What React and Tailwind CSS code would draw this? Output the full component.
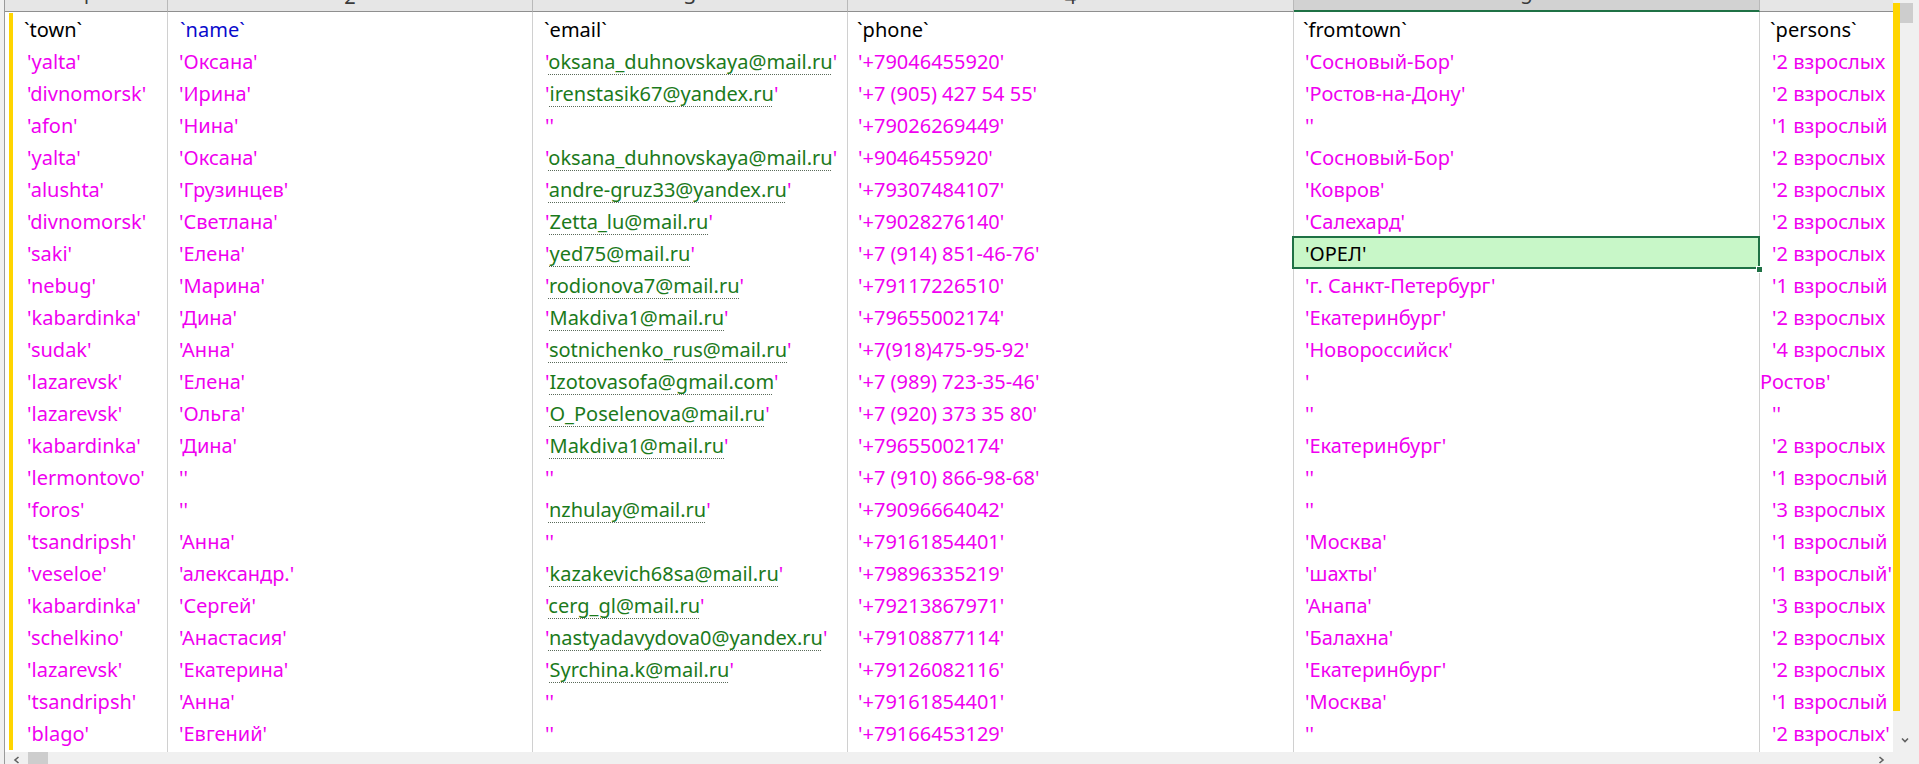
import React from "react";

const MAG = "text-[#f000f0]";

const rows = [
  ["'yalta'", "'Оксана'", "oksana_duhnovskaya@mail.ru", "'+79046455920'", "'Сосновый-Бор'", "'2 взрослых"],
  ["'divnomorsk'", "'Ирина'", "irenstasik67@yandex.ru", "'+7 (905) 427 54 55'", "'Ростов-на-Дону'", "'2 взрослых"],
  ["'afon'", "'Нина'", "", "'+79026269449'", "''", "'1 взрослый"],
  ["'yalta'", "'Оксана'", "oksana_duhnovskaya@mail.ru", "'+9046455920'", "'Сосновый-Бор'", "'2 взрослых"],
  ["'alushta'", "'Грузинцев'", "andre-gruz33@yandex.ru", "'+79307484107'", "'Ковров'", "'2 взрослых"],
  ["'divnomorsk'", "'Светлана'", "Zetta_lu@mail.ru", "'+79028276140'", "'Салехард'", "'2 взрослых"],
  ["'saki'", "'Елена'", "yed75@mail.ru", "'+7 (914) 851-46-76'", "'ОРЕЛ'", "'2 взрослых"],
  ["'nebug'", "'Марина'", "rodionova7@mail.ru", "'+79117226510'", "'г. Санкт-Петербург'", "'1 взрослый"],
  ["'kabardinka'", "'Дина'", "Makdiva1@mail.ru", "'+79655002174'", "'Екатеринбург'", "'2 взрослых"],
  ["'sudak'", "'Анна'", "sotnichenko_rus@mail.ru", "'+7(918)475-95-92'", "'Новороссийск'", "'4 взрослых"],
  ["'lazarevsk'", "'Елена'", "Izotovasofa@gmail.com", "'+7 (989) 723-35-46'", "'", "Ростов'"],
  ["'lazarevsk'", "'Ольга'", "O_Poselenova@mail.ru", "'+7 (920) 373 35 80'", "''", "''"],
  ["'kabardinka'", "'Дина'", "Makdiva1@mail.ru", "'+79655002174'", "'Екатеринбург'", "'2 взрослых"],
  ["'lermontovo'", "''", "", "'+7 (910) 866-98-68'", "''", "'1 взрослый"],
  ["'foros'", "''", "nzhulay@mail.ru", "'+79096664042'", "''", "'3 взрослых"],
  ["'tsandripsh'", "'Анна'", "", "'+79161854401'", "'Москва'", "'1 взрослый"],
  ["'veseloe'", "'александр.'", "kazakevich68sa@mail.ru", "'+79896335219'", "'шахты'", "'1 взрослый'"],
  ["'kabardinka'", "'Сергей'", "cerg_gl@mail.ru", "'+79213867971'", "'Анапа'", "'3 взрослых"],
  ["'schelkino'", "'Анастасия'", "nastyadavydova0@yandex.ru", "'+79108877114'", "'Балахна'", "'2 взрослых"],
  ["'lazarevsk'", "'Екатерина'", "Syrchina.k@mail.ru", "'+79126082116'", "'Екатеринбург'", "'2 взрослых"],
  ["'tsandripsh'", "'Анна'", "", "'+79161854401'", "'Москва'", "'1 взрослый"],
  ["'blago'", "'Евгений'", "", "'+79166453129'", "''", "'2 взрослых'"],
];

const cellBase = "h-[32px] shrink-0 overflow-hidden whitespace-pre leading-[28px] pt-[4px]";

function Email({ v }) {
  if (!v) return <span className={MAG}>''</span>;
  return (
    <span>
      <span className={MAG}>'</span>
      <span className="text-[#1b7a1b] underline decoration-dotted decoration-[#5a6a5a] underline-offset-[5px] decoration-1">{v}</span>
      <span className={MAG}>'</span>
    </span>
  );
}

function Row({ r, idx }) {
  const selected = idx === 6;
  return (
    <div className="flex h-[32px] shrink-0">
      <div className={`${cellBase} w-[155px] border-r border-[#d0d0d0] pl-[14px] ${MAG}`}>{r[0]}</div>
      <div className={`${cellBase} w-[365px] border-r border-[#d0d0d0] pl-[11px] ${MAG}`}>{r[1]}</div>
      <div className={`${cellBase} w-[315px] border-r border-[#d0d0d0] pl-[12px]`}>
        <Email v={r[2]} />
      </div>
      <div className={`${cellBase} w-[446px] border-r border-[#d0d0d0] pl-[10px] ${MAG}`}>{r[3]}</div>
      {selected ? (
        <div className={`${cellBase} relative w-[466px] border-r border-[#d0d0d0] pl-[11px] text-black bg-[#c8f7c8] overflow-visible`}>
          {r[4]}
          <div className="absolute top-[0px] bottom-[-1px] left-[-2px] right-[-1px] border-2 border-[#1f7145] z-10" />
          <div className="absolute right-[-4px] bottom-[-5px] w-[7px] h-[7px] bg-[#1f7145] border border-white z-20" />
        </div>
      ) : (
        <div className={`${cellBase} w-[466px] border-r border-[#d0d0d0] pl-[11px] ${MAG}`}>{r[4]}</div>
      )}
      <div className={`${cellBase} flex-1 ${idx === 10 ? "pl-[0px]" : "pl-[12px]"} ${MAG}`}>{r[5]}</div>
    </div>
  );
}

function HeadCell({ w, label, sel, last }) {
  return (
    <div
      className={`${w} h-[12px] shrink-0 overflow-hidden flex justify-center items-start ${
        sel ? "bg-[#d2d2d2] border-b-2 border-[#1f7145]" : "bg-[#e6e6e6] border-b border-[#8f8f8f]"
      } ${last ? "" : "border-r border-r-[#b9b9b9]"}`}
    >
      {label && <span className="leading-none text-[20px] text-[#3a3a3a] mt-[-13px]">{label}</span>}
    </div>
  );
}

function Chevron({ dir }) {
  const d =
    dir === "left" ? "M5.5 1 L2 4 L5.5 7" : dir === "right" ? "M2.5 1 L6 4 L2.5 7" : "M1 2.5 L4 5.5 L7 2.5";
  return (
    <svg width="8" height="8" viewBox="0 0 8 8" className="shrink-0">
      <path d={d} fill="none" stroke="#606060" strokeWidth="1.6" />
    </svg>
  );
}

export default function App() {
  return (
    <div className="w-[1919px] h-[764px] overflow-hidden bg-white flex font-['Noto_Sans',sans-serif] text-[20px]">
      <div className="w-[4px] h-full bg-[#f0f0f0] shrink-0" />
      <div className="w-[1px] h-full bg-[#9a9a9a] shrink-0" />
      <div className="flex-1 flex flex-col min-w-0">
        <div className="flex h-[12px] shrink-0">
          <HeadCell w="w-[163px]" label="1" />
          <HeadCell w="w-[365px]" label="2" />
          <HeadCell w="w-[315px]" label="3" />
          <HeadCell w="w-[446px]" label="4" />
          <HeadCell w="w-[466px]" label="5" sel />
          <HeadCell w="flex-1" label="" last />
        </div>
        <div className="flex h-[740px] shrink-0 overflow-hidden">
          <div className="w-[4px] shrink-0" />
          <div className="w-[4px] shrink-0 flex flex-col">
            <div className="h-[1px]" />
            <div className="h-[737px] bg-[#ffd500]" />
          </div>
          <div className="flex-1 flex flex-col min-w-0 overflow-hidden">
            <div className="flex h-[32px] shrink-0">
              <div className={`${cellBase} w-[155px] border-r border-[#d0d0d0] pl-[11px] text-black`}>`town`</div>
              <div className={`${cellBase} w-[365px] border-r border-[#d0d0d0] pl-[12px] text-[#0a0acc]`}>`name`</div>
              <div className={`${cellBase} w-[315px] border-r border-[#d0d0d0] pl-[11px] text-black`}>`email`</div>
              <div className={`${cellBase} w-[446px] border-r border-[#d0d0d0] pl-[9px] text-black`}>`phone`</div>
              <div className={`${cellBase} w-[466px] border-r border-[#d0d0d0] pl-[9px] text-black`}>`fromtown`</div>
              <div className={`${cellBase} flex-1 pl-[10px] text-black`}>`persons`</div>
            </div>
            {rows.map((r, i) => (
              <Row key={i} r={r} idx={i} />
            ))}
            <div className="flex h-[32px] shrink-0">
              <div className="w-[155px] border-r border-[#d0d0d0] shrink-0" />
              <div className="w-[365px] border-r border-[#d0d0d0] shrink-0" />
              <div className="w-[315px] border-r border-[#d0d0d0] shrink-0" />
              <div className="w-[446px] border-r border-[#d0d0d0] shrink-0" />
              <div className="w-[466px] border-r border-[#d0d0d0] shrink-0" />
            </div>
          </div>
        </div>
        <div className="flex h-[12px] shrink-0 bg-[#f0f0f0] items-end">
          <div className="w-[8px] shrink-0" />
          <div className="h-[8px] flex items-start"><Chevron dir="left" /></div>
          <div className="w-[7px] shrink-0" />
          <div className="w-[20px] h-full bg-[#cdcdcd] shrink-0" />
          <div className="flex-1" />
          <div className="h-[8px] flex items-start"><Chevron dir="right" /></div>
          <div className="w-[8px] shrink-0" />
        </div>
      </div>
      <div className="w-[7px] h-full shrink-0 flex flex-col bg-[#f0f0f0]">
        <div className="h-[3px]" />
        <div className="h-[708px] bg-[#ffd500]" />
      </div>
      <div className="w-[13px] h-full shrink-0 flex flex-col bg-[#f0f0f0]">
        <div className="h-[3px]" />
        <div className="h-[20px] bg-[#cdcdcd]" />
        <div className="flex-1" />
        <div className="h-[8px] flex pl-[1px]"><Chevron dir="down" /></div>
        <div className="h-[20px]" />
      </div>
      <div className="w-[6px] h-full shrink-0 bg-[#f0f0f0]" />
    </div>
  );
}
